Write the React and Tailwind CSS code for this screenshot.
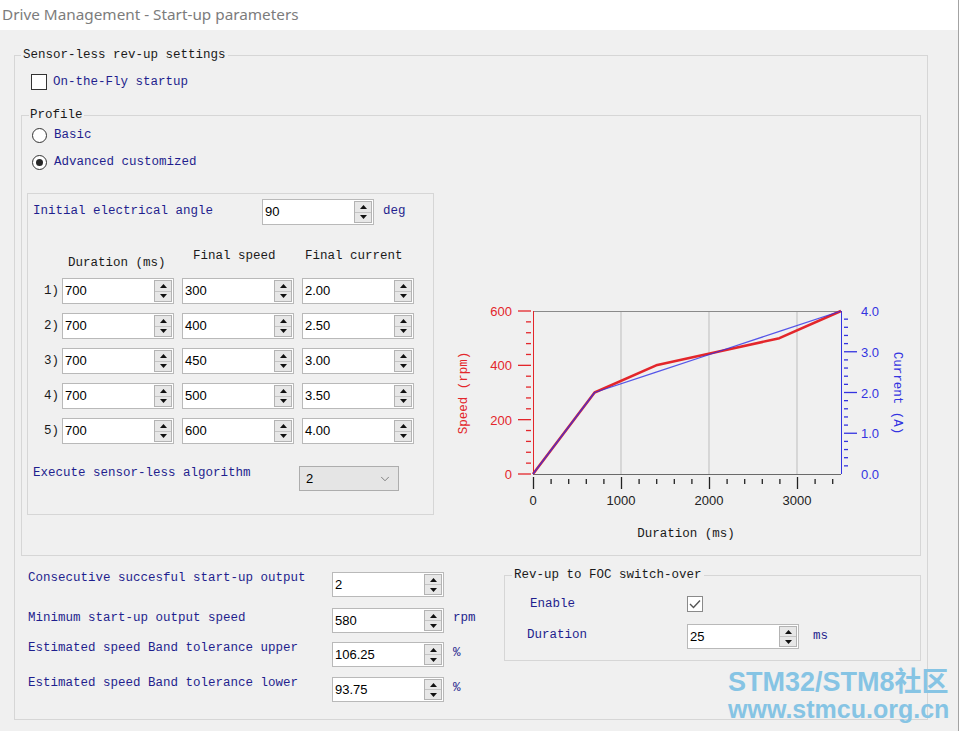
import React from "react";
import { ChevronDown } from "lucide-react";

// shared text styles
const mono = "font-['Liberation_Mono',monospace] text-[12.5px] leading-[16px]";
const navy = "text-[#1f1f8e]";
const num = "font-['Liberation_Sans',Arial,sans-serif] text-[13px]";

function Arrow({ down }) {
  return (
    <svg width="7" height="4" viewBox="0 0 7 4">
      {down ? <polygon points="0,0 7,0 3.5,4" fill="#111" /> : <polygon points="0,4 7,4 3.5,0" fill="#111" />}
    </svg>
  );
}

function Spin({ value, h = "h-[26px]" }) {
  return (
    <div className={`flex w-[112px] ${h} border border-[#b9b9b9] bg-white`}>
      <span className={`${num} flex-1 pl-[2px] pt-[4px] leading-[16px] text-black`}>{value}</span>
      <div className="my-[1px] mr-[1px] flex w-[18px] flex-col border border-[#b3b3b3] bg-[#e7e7e7]">
        <div className="flex flex-1 items-center justify-center border-b border-[#c4c4c4]">
          <Arrow />
        </div>
        <div className="flex flex-1 items-center justify-center">
          <Arrow down />
        </div>
      </div>
    </div>
  );
}

function Check({ checked }) {
  return (
    <div
      className={`flex h-[16px] w-[16px] items-center justify-center border bg-white ${
        checked ? "border-[#8a8a8a]" : "border-[#333333]"
      }`}
    >
      {checked && (
        <svg width="12" height="10" viewBox="0 0 12 10">
          <polyline points="1,5 4.5,8.5 11,1.5" fill="none" stroke="#555" strokeWidth="1.4" />
        </svg>
      )}
    </div>
  );
}

function Radio({ on }) {
  return (
    <div className="flex h-[15px] w-[15px] items-center justify-center rounded-full border border-[#333333] bg-white">
      {on && <div className="h-[7px] w-[7px] rounded-full bg-[#262626]" />}
    </div>
  );
}

// ---- chart geometry (svg local coords) ----
const X0 = 83;
const X1 = 391;
const YT = 21;
const YB = 184;
const xs = (ms) => X0 + (ms * (X1 - X0)) / 3500;
const ys = (rpm) => YB - (rpm * (YB - YT)) / 600;
const yc = (a) => YB - (a * (YB - YT)) / 4;

const steps = [
  [0, 0, 0],
  [700, 300, 2],
  [1400, 400, 2.5],
  [2100, 450, 3],
  [2800, 500, 3.5],
  [3500, 600, 4],
];

function Chart() {
  const red = "#e3262b";
  const blue = "#3434e0";
  const sansFont = "'Liberation Sans', Arial, sans-serif";
  const monoFont = "'Liberation Mono', monospace";

  const speedPts = steps.map(([t, s]) => `${xs(t)},${ys(s)}`).join(" ");
  const curPts = steps.map(([t, , a]) => `${xs(t)},${yc(a)}`).join(" ");

  const leftMinor = [];
  for (let s = 0; s <= 600; s += 40) if (s % 200 !== 0) leftMinor.push(s);
  const rightMinor = [];
  for (let a = 0; a <= 4.001; a += 0.2) if (Math.abs(a - Math.round(a)) > 0.01) rightMinor.push(a);
  const bottomMinor = [];
  for (let t = 200; t < 3500; t += 200) if (t % 1000 !== 0) bottomMinor.push(t);

  return (
    <svg width="460" height="260" viewBox="0 0 460 260" className="shrink-0">
      {/* grid */}
      {[1000, 2000, 3000].map((t) => (
        <line key={t} x1={xs(t)} y1={YT} x2={xs(t)} y2={YB} stroke="#bdbdbd" />
      ))}
      <line x1={X0} y1={YT + 0.5} x2={X1} y2={YT + 0.5} stroke="#8a8a8a" />
      <line x1={X0} y1={YB + 0.5} x2={X1} y2={YB + 0.5} stroke="#6a6a6a" />
      <line x1={X0 + 0.5} y1={YT} x2={X0 + 0.5} y2={YB} stroke={red} />
      <line x1={X1 + 0.5} y1={YT} x2={X1 + 0.5} y2={YB} stroke={blue} />

      {/* left axis */}
      {[0, 200, 400, 600].map((s) => (
        <g key={s}>
          <line x1={68} y1={ys(s)} x2={81} y2={ys(s)} stroke={red} strokeWidth="1.3" />
          <text x={62} y={ys(s) + 5} textAnchor="end" fill={red} fontSize="13" fontFamily={sansFont}>
            {s}
          </text>
        </g>
      ))}
      {leftMinor.map((s) => (
        <line key={s} x1={76} y1={ys(s)} x2={81} y2={ys(s)} stroke={red} strokeWidth="1.3" />
      ))}

      {/* right axis */}
      {[1, 2, 3].map((a) => (
        <line key={a} x1={394} y1={yc(a)} x2={407} y2={yc(a)} stroke={blue} strokeWidth="1.3" />
      ))}
      {rightMinor.map((a) => (
        <line key={a} x1={394} y1={yc(a)} x2={398} y2={yc(a)} stroke={blue} strokeWidth="1.3" />
      ))}
      {[0, 1, 2, 3, 4].map((a) => (
        <text key={a} x={411} y={yc(a) + 5} fill={blue} fontSize="13" fontFamily={sansFont}>
          {a.toFixed(1)}
        </text>
      ))}

      {/* bottom axis */}
      {[0, 1000, 2000, 3000].map((t) => (
        <g key={t}>
          <line x1={xs(t) + 0.5} y1={187} x2={xs(t) + 0.5} y2={199} stroke="#222" strokeWidth="1.3" />
          <text x={xs(t)} y={215} textAnchor="middle" fill="#222" fontSize="13" fontFamily={sansFont}>
            {t}
          </text>
        </g>
      ))}
      {bottomMinor.map((t) => (
        <line key={t} x1={xs(t) + 0.5} y1={189} x2={xs(t) + 0.5} y2={194} stroke="#222" strokeWidth="1.3" />
      ))}

      {/* titles */}
      <text x={236} y={247} textAnchor="middle" fill="#1a1a1a" fontSize="12.5" fontFamily={monoFont}>
        Duration (ms)
      </text>
      <text
        x={0}
        y={0}
        transform="translate(17 103) rotate(-90)"
        textAnchor="middle"
        fill={red}
        fontSize="12.5"
        fontFamily={monoFont}
      >
        Speed (rpm)
      </text>
      <text
        x={0}
        y={0}
        transform="translate(444 103) rotate(90)"
        textAnchor="middle"
        fill={blue}
        fontSize="12.5"
        fontFamily={monoFont}
      >
        Current (A)
      </text>

      {/* data */}
      <polyline points={speedPts} fill="none" stroke={red} strokeWidth="2.6" strokeLinejoin="round" />
      <polyline points={curPts} fill="none" stroke="#3030e6" strokeOpacity="0.8" strokeWidth="1.3" strokeLinejoin="round" />
    </svg>
  );
}

const rows = [
  ["1)", "700", "300", "2.00"],
  ["2)", "700", "400", "2.50"],
  ["3)", "700", "450", "3.00"],
  ["4)", "700", "500", "3.50"],
  ["5)", "700", "600", "4.00"],
];

export default function App() {
  return (
    <div className="relative h-[731px] w-[959px] overflow-hidden border-r border-[#a3a3a3] bg-[#f0f0f0]">
      {/* Title bar */}
      <div className="h-[30px] bg-white pl-[2px] font-['Noto_Sans',sans-serif] text-[15.3px] leading-[28px] text-[#7c7c7c]">
        Drive Management - Start-up parameters
      </div>

      {/* Sensor-less rev-up settings */}
      <fieldset className="ml-[14px] mt-[17px] h-[673px] w-[914px] border border-[#d6d6d6]">
        <legend className={`${mono} ml-[6px] px-[2px] text-[#1a1a1a]`}>Sensor-less rev-up settings</legend>

        <div className="mt-[11px] flex h-[16px] items-center gap-[6px] pl-[16px]">
          <Check />
          <span className={`${mono} ${navy}`}>On-the-Fly startup</span>
        </div>

        {/* Profile */}
        <fieldset className="ml-[6px] mt-[17px] h-[449px] w-[900px] border border-[#d6d6d6]">
          <legend className={`${mono} ml-[7px] px-[1px] text-[#1a1a1a]`}>Profile</legend>

          <div className="mt-[4px] flex h-[16px] items-center gap-[7px] pl-[10px]">
            <Radio />
            <span className={`${mono} ${navy}`}>Basic</span>
          </div>
          <div className="mt-[11px] flex h-[16px] items-center gap-[7px] pl-[10px]">
            <Radio on />
            <span className={`${mono} ${navy}`}>Advanced customized</span>
          </div>

          <div className="mt-[23px] flex items-start">
            {/* steps table */}
            <div className="ml-[5px] h-[322px] w-[407px] border border-[#d6d6d6]">
              <div className="mt-[5px] flex items-start">
                <span className={`${mono} ${navy} mt-[4px] w-[234px] pl-[5px]`}>Initial electrical angle</span>
                <Spin value="90" />
                <span className={`${mono} ${navy} ml-[9px] mt-[4px]`}>deg</span>
              </div>

              <div className={`${mono} mt-[22px] flex h-[31px] items-start pl-[40px] text-[#1a1a1a]`}>
                <span className="mt-[8px] w-[125px]">Duration (ms)</span>
                <span className="mt-[1px] w-[112px]">Final speed</span>
                <span className="mt-[1px]">Final current</span>
              </div>

              <div className="flex flex-col gap-[9px]">
                {rows.map(([n, d, s, c]) => (
                  <div key={n} className="flex h-[26px] items-center">
                    <span className={`${mono} w-[34px] pl-[16px] text-[#1a1a1a]`}>{n}</span>
                    <div className="flex gap-[8px]">
                      <Spin value={d} />
                      <Spin value={s} />
                      <Spin value={c} />
                    </div>
                  </div>
                ))}
              </div>

              <div className="mt-[22px] flex items-start">
                <span className={`${mono} ${navy} -mt-[1px] w-[271px] pl-[5px]`}>Execute sensor-less algorithm</span>
                <div className="flex h-[25px] w-[100px] items-center justify-between border border-[#adadad] bg-[#e5e5e5] pl-[6px] pr-[6px]">
                  <span className={`${num} text-black`}>2</span>
                  <ChevronDown size={14} strokeWidth={1.2} color="#555" />
                </div>
              </div>
            </div>

            {/* chart */}
            <div className="ml-[16px] mt-[97px]">
              <Chart />
            </div>
          </div>
        </fieldset>

        {/* bottom settings */}
        <div className="flex items-start">
          <div className="w-[489px] pl-[13px]">
            <div className="mt-[16px] flex items-start">
              <span className={`${mono} ${navy} -mt-[2px] w-[304px]`}>Consecutive succesful start-up output</span>
              <Spin value="2" h="h-[25px]" />
            </div>
            <div className="mt-[11px] flex items-start">
              <span className={`${mono} ${navy} mt-[2px] w-[304px]`}>Minimum start-up output speed</span>
              <Spin value="580" h="h-[25px]" />
              <span className={`${mono} ${navy} ml-[9px] mt-[2px]`}>rpm</span>
            </div>
            <div className="mt-[9px] flex items-start">
              <span className={`${mono} ${navy} -mt-[2px] w-[304px]`}>Estimated speed Band tolerance upper</span>
              <Spin value="106.25" h="h-[25px]" />
              <span className={`${mono} ${navy} ml-[9px] mt-[3px]`}>%</span>
            </div>
            <div className="mt-[10px] flex items-start">
              <span className={`${mono} ${navy} -mt-[2px] w-[304px]`}>Estimated speed Band tolerance lower</span>
              <Spin value="93.75" h="h-[25px]" />
              <span className={`${mono} ${navy} ml-[9px] mt-[3px]`}>%</span>
            </div>
          </div>

          <fieldset className="mt-[11px] h-[94px] w-[417px] border border-[#d6d6d6]">
            <legend className={`${mono} ml-[7px] px-[2px] text-[#1a1a1a]`}>Rev-up to FOC switch-over</legend>
            <div className="mt-[12px] flex h-[17px] items-center">
              <span className={`${mono} ${navy} w-[182px] pl-[25px]`}>Enable</span>
              <Check checked />
            </div>
            <div className="mt-[12px] flex items-start">
              <span className={`${mono} ${navy} mt-[3px] w-[182px] pl-[22px]`}>Duration</span>
              <Spin value="25" h="h-[25px]" />
              <span className={`${mono} ${navy} ml-[14px] mt-[4px]`}>ms</span>
            </div>
          </fieldset>
        </div>
      </fieldset>

      {/* watermark */}
      <div className="pointer-events-none absolute left-[728px] top-[668px] font-['Liberation_Sans','Noto_Sans_CJK_SC',sans-serif] font-bold leading-none text-[#86c4e4]">
        <div className="text-[27px] leading-[29px]">STM32/STM8社区</div>
        <div className="text-[25px] leading-[25px]">www.stmcu.org.cn</div>
      </div>
    </div>
  );
}
